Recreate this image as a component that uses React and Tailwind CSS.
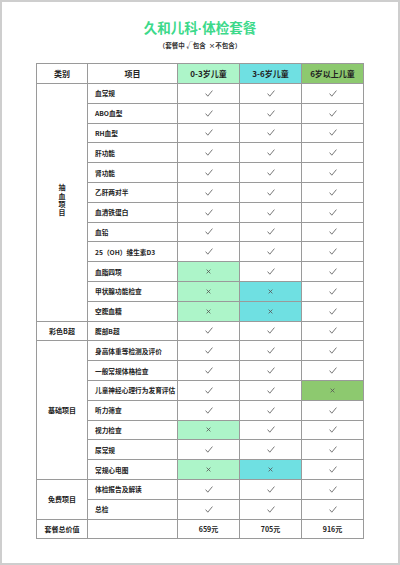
import React from 'react';

const FONT = { fontFamily: '"Noto Sans CJK SC", "Noto Sans", sans-serif' };

const MINT = 'bg-[#adf5c9]';
const CYAN = 'bg-[#6fe0e2]';
const GREEN = 'bg-[#8dc96f]';

const groups = [
  {
    name: '抽血项目',
    vertical: true,
    rows: [
      ['血常规', 1, 1, 1],
      ['ABO血型', 1, 1, 1],
      ['RH血型', 1, 1, 1],
      ['肝功能', 1, 1, 1],
      ['肾功能', 1, 1, 1],
      ['乙肝两对半', 1, 1, 1],
      ['血清铁蛋白', 1, 1, 1],
      ['血铅', 1, 1, 1],
      ['25（OH）维生素D3', 1, 1, 1],
      ['血脂四项', 0, 1, 1],
      ['甲状腺功能检查', 0, 0, 1],
      ['空腹血糖', 0, 0, 1],
    ],
  },
  { name: '彩色B超', rows: [['腹部B超', 1, 1, 1]] },
  {
    name: '基础项目',
    rows: [
      ['身高体重等检测及评价', 1, 1, 1],
      ['一般常规体格检查', 1, 1, 1],
      ['儿童神经心理行为发育评估', 1, 1, 0],
      ['听力筛查', 1, 1, 1],
      ['视力检查', 0, 1, 1],
      ['尿常规', 1, 1, 1],
      ['常规心电图', 0, 0, 1],
    ],
  },
  {
    name: '免费项目',
    rows: [
      ['体检报告及解读', 1, 1, 1],
      ['总检', 1, 1, 1],
    ],
  },
];

const Check = () => (
  <svg width="8" height="7" viewBox="0 0 8 7" className="mx-auto block">
    <path d="M0.6 3.6 L2.8 6.2 L7.4 0.6" fill="none" stroke="#555" strokeWidth="0.8" />
  </svg>
);

const Cross = () => (
  <svg width="5" height="5" viewBox="0 0 5 5" className="mx-auto block">
    <path d="M0.6 0.6 L4.4 4.4 M4.4 0.6 L0.6 4.4" fill="none" stroke="#555" strokeWidth="0.8" />
  </svg>
);

const cellBorder = 'border border-[#9a9a9a]';
const xColors = [MINT, CYAN, GREEN];

const App = () => {
  return (
    <div style={FONT} className="w-[400px] h-[565px] bg-white border-2 border-[#cecece] box-border">
      <h1 className="h-[18px] overflow-visible text-center text-[13.5px] font-bold text-[#3cd98a] leading-[18px] mt-[16px]">
        久和儿科<span className="font-['Liberation_Sans',sans-serif]">·</span>体检套餐
      </h1>
      <p className="text-center text-[6.5px] font-semibold text-[#333] leading-[10px] mt-[4px]">
        （套餐中 √包含 &nbsp;×不包含）
      </p>
      <table className="mx-auto mt-[13px] border-collapse table-fixed w-[327px] text-[#222]">
        <colgroup>
          <col className="w-[51px]" />
          <col className="w-[90px]" />
          <col className="w-[62px]" />
          <col className="w-[62px]" />
          <col className="w-[62px]" />
        </colgroup>
        <thead>
          <tr className="h-[20px] text-[8px] font-bold">
            <th className={`${cellBorder} font-bold`}>类别</th>
            <th className={`${cellBorder} font-bold`}>项目</th>
            <th className={`${cellBorder} ${MINT} font-bold`}>0-3岁儿童</th>
            <th className={`${cellBorder} ${CYAN} font-bold`}>3-6岁儿童</th>
            <th className={`${cellBorder} ${GREEN} font-bold`}>6岁以上儿童</th>
          </tr>
        </thead>
        <tbody>
          {groups.map((g) =>
            g.rows.map((r, i) => (
              <tr key={g.name + r[0]} className="h-[19.8px]">
                {i === 0 && (
                  <td rowSpan={g.rows.length} className={`${cellBorder} text-center text-[7px] font-semibold`}>
                    {g.vertical ? (
                      <span className="inline-block [writing-mode:vertical-rl] tracking-[1.4px] leading-[8px]">
                        {g.name}
                      </span>
                    ) : (
                      g.name
                    )}
                  </td>
                )}
                <td className={`${cellBorder} pl-[7px] text-[6.7px] font-semibold whitespace-nowrap`}>{r[0]}</td>
                {[r[1], r[2], r[3]].map((v, k) => (
                  <td key={k} className={`${cellBorder} ${v ? '' : xColors[k]}`}>
                    {v ? <Check /> : <Cross />}
                  </td>
                ))}
              </tr>
            ))
          )}
          <tr className="h-[19.8px] text-[7px] font-bold">
            <td className={`${cellBorder} text-center`}>套餐总价值</td>
            <td className={cellBorder}></td>
            <td className={`${cellBorder} text-center`}>659元</td>
            <td className={`${cellBorder} text-center`}>705元</td>
            <td className={`${cellBorder} text-center`}>916元</td>
          </tr>
        </tbody>
      </table>
    </div>
  );
};

export default App;
